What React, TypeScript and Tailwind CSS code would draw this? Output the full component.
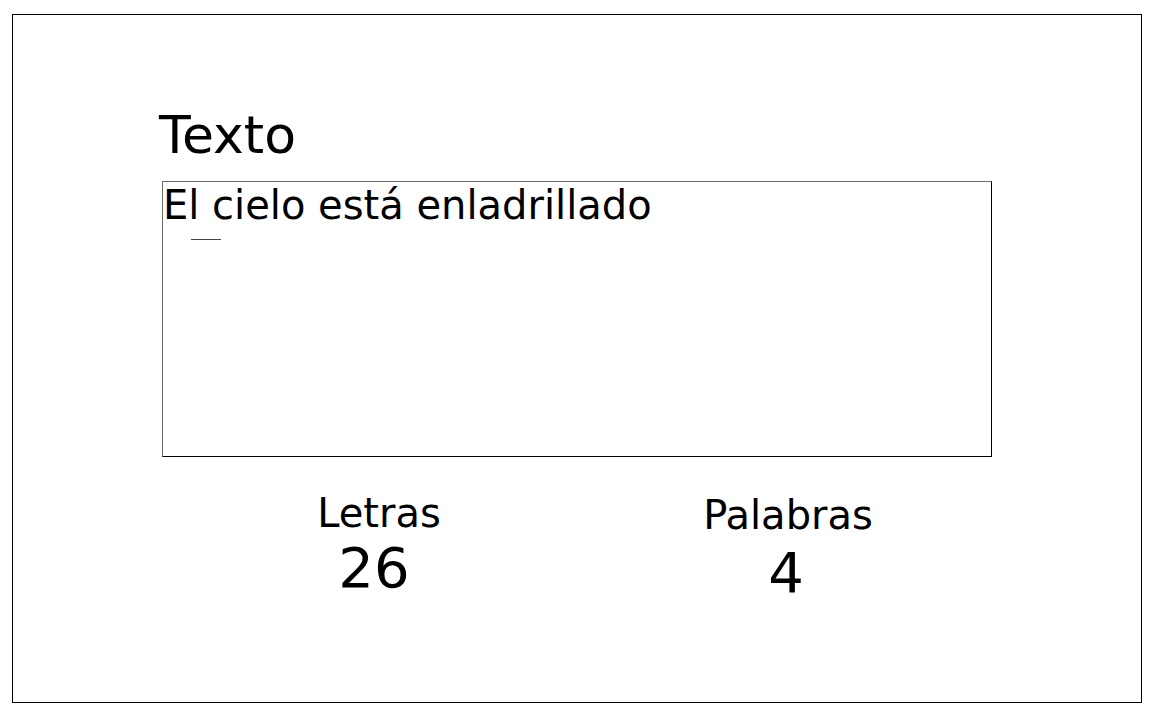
import React, { useState } from 'react';

// Contador de letras y palabras
const countLetters = (s: string) => s.length;
const countWords = (s: string) => s.trim().split(/\s+/).filter(Boolean).length;

export default function App() {
    const [texto] = useState('El cielo está enladrillado');

    return (
        <div className="bg-white min-h-[722px] pt-[14px] pl-[12px] font-['DejaVu_Sans',sans-serif] text-black">
            <div className="w-[1130px] h-[689px] border border-black">
                {/* Title */}
                <h1 className="ml-[146px] mt-[92px] text-[52px] leading-[56px]">Texto</h1>

                {/* Text box */}
                <div className="ml-[149px] mt-[18px] w-[830px] h-[276px] border border-t-[#6a6a6a] border-l-[#6a6a6a] border-r-black border-b-black">
                    <div className="text-[40px] leading-[46px]">{texto}</div>
                    <div className="ml-[28px] mt-[11px] w-[30px] h-px bg-[#444]"></div>
                </div>

                {/* Stats */}
                <div className="flex mt-[33px] ml-[266px] gap-[209px]">
                    <div className="w-[200px] flex flex-col items-center">
                        <span className="text-[40px] leading-[46px]">Letras</span>
                        <span className="text-[56px] leading-[64px] pr-[10px]">{countLetters(texto)}</span>
                    </div>
                    <div className="w-[200px] flex flex-col items-center mt-[2px]">
                        <span className="text-[40px] leading-[46px]">Palabras</span>
                        <span className="text-[56px] leading-[64px] pr-[4px] mt-[3px]">{countWords(texto)}</span>
                    </div>
                </div>
            </div>
        </div>
    );
}
